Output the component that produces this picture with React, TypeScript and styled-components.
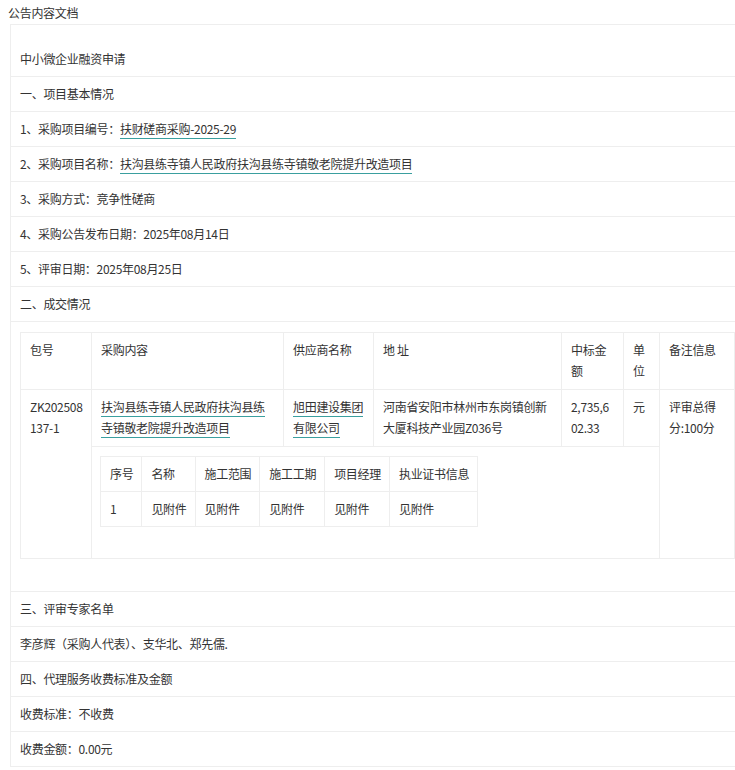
import React from 'react';
import styled, { createGlobalStyle } from 'styled-components';

const GlobalStyle = createGlobalStyle`
  body {
    margin: 0;
    background: #fff;
    font-family: 'Noto Sans CJK SC', 'Noto Sans', sans-serif;
    font-size: 12px;
    letter-spacing: -0.3px;
    color: #333;
  }
`;

const Page = styled.div`
  padding: 4px 0 0 8px;
`;

const DocTitle = styled.div`
  height: 20px;
  line-height: 18px;
`;

const Doc = styled.div`
  border-left: 1px solid #eee;
  border-top: 1px solid #eee;
  margin-left: 2px;
`;

const Row = styled.div<{ $first?: boolean }>`
  padding: ${(p) => (p.$first ? '25px 0 8px 9px' : '8px 0 8px 9px')};
  line-height: 18px;
  border-bottom: 1px solid #eee;
`;

const Link = styled.span`
  border-bottom: 1px solid #3a9f9f;
  padding-bottom: 1px;
`;

const TableWrap = styled.div`
  padding: 10px 3px 32px 9px;
  border-bottom: 1px solid #eee;
`;

const Table = styled.table`
  border-collapse: collapse;
  width: 714px;
  table-layout: fixed;
  line-height: 21px;
  & td {
    border: 1px solid #eee;
    vertical-align: top;
    padding: 6px 8px 8px 9px;
    word-break: break-all;
  }
`;

const Nested = styled.table`
  border-collapse: collapse;
  line-height: 18px;
  & td {
    border: 1px solid #eee;
    padding: 8px 8px 8px 9px;
    white-space: nowrap;
  }
`;

const NestedCell = styled.td`
  && {
    padding: 9px 0 31px 8px;
    border-bottom: 1px solid #eee;
  }
`;

const App = () => (
  <Page>
    <GlobalStyle />
    <DocTitle>公告内容文档</DocTitle>
    <Doc>
      <Row $first>中小微企业融资申请</Row>
      <Row>一、项目基本情况</Row>
      <Row>1、采购项目编号：<Link>扶财磋商采购-2025-29</Link></Row>
      <Row>2、采购项目名称：<Link>扶沟县练寺镇人民政府扶沟县练寺镇敬老院提升改造项目</Link></Row>
      <Row>3、采购方式：竞争性磋商</Row>
      <Row>4、采购公告发布日期：2025年08月14日</Row>
      <Row>5、评审日期：2025年08月25日</Row>
      <Row>二、成交情况</Row>
      <TableWrap>
        <Table>
          <colgroup>
            <col style={{ width: 71 }} />
            <col style={{ width: 192 }} />
            <col style={{ width: 90 }} />
            <col style={{ width: 188 }} />
            <col style={{ width: 62 }} />
            <col style={{ width: 36 }} />
            <col style={{ width: 75 }} />
          </colgroup>
          <tbody>
            <tr style={{ height: 52 }}>
              <td>包号</td>
              <td>采购内容</td>
              <td>供应商名称</td>
              <td>地 址</td>
              <td>中标金额</td>
              <td>单位</td>
              <td>备注信息</td>
            </tr>
            <tr style={{ height: 52 }}>
              <td rowSpan={2}>ZK202508137-1</td>
              <td><Link>扶沟县练寺镇人民政府扶沟县练寺镇敬老院提升改造项目</Link></td>
              <td><Link>旭田建设集团有限公司</Link></td>
              <td>河南省安阳市林州市东岗镇创新大厦科技产业园Z036号</td>
              <td>2,735,602.33</td>
              <td>元</td>
              <td rowSpan={2}>评审总得分:100分</td>
            </tr>
            <tr>
              <NestedCell colSpan={5}>
                <Nested>
                  <tbody>
                    <tr>
                      <td>序号</td><td>名称</td><td>施工范围</td><td>施工工期</td><td>项目经理</td><td>执业证书信息</td>
                    </tr>
                    <tr>
                      <td>1</td><td>见附件</td><td>见附件</td><td>见附件</td><td>见附件</td><td style={{ paddingRight: 40 }}>见附件</td>
                    </tr>
                  </tbody>
                </Nested>
              </NestedCell>
            </tr>
          </tbody>
        </Table>
      </TableWrap>
      <Row>三、评审专家名单</Row>
      <Row>李彦辉（采购人代表）、支华北、郑先儒.</Row>
      <Row>四、代理服务收费标准及金额</Row>
      <Row>收费标准：不收费</Row>
      <Row>收费金额：0.00元</Row>
    </Doc>
  </Page>
);

export default App;
